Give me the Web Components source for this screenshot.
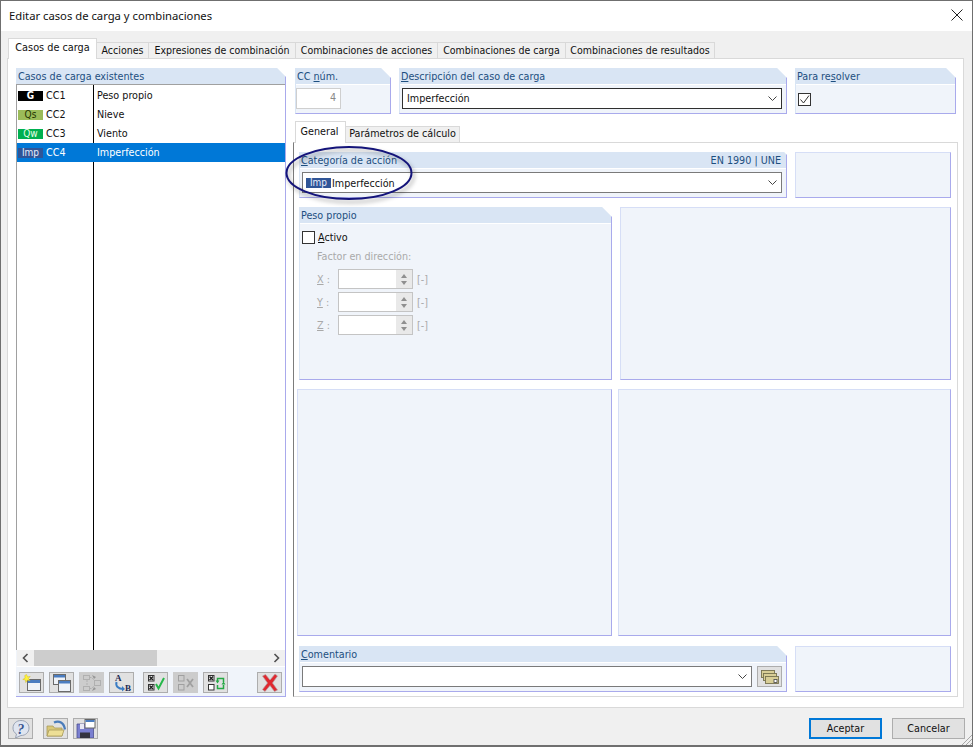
<!DOCTYPE html>
<html lang="es"><head><meta charset="utf-8"><title>Editar casos de carga y combinaciones</title>
<style>html,body{margin:0;padding:0;background:#f0f0f0;font:10.7px "DejaVu Sans Condensed","DejaVu Sans",sans-serif;color:#111}</style></head>
<body>
<x-dialog caption="Editar casos de carga y combinaciones">
  <x-tabbar slot="tabs">
    <x-tab active>Casos de carga</x-tab><x-tab w="52">Acciones</x-tab><x-tab w="147">Expresiones de combinación</x-tab><x-tab w="142">Combinaciones de acciones</x-tab><x-tab w="128">Combinaciones de carga</x-tab><x-tab w="149">Combinaciones de resultados</x-tab>
  </x-tabbar>
  <x-load-list slot="left"></x-load-list>
  <x-case-editor slot="right"></x-case-editor>
  <x-footer slot="footer"></x-footer>
</x-dialog>
<script>
function def(name,css,html,init){
  customElements.define(name,class extends HTMLElement{
    constructor(){super();const r=this.attachShadow({mode:'open'});r.innerHTML='<style>'+css+'</style>'+(typeof html==='function'?html(this):html);}
    connectedCallback(){
      if(init)init(this);
    }
  });
}
const ICON={
new:`<svg viewBox="0 0 20 18" width="20" height="18"><rect x="5.500" y="5.500" width="13" height="11" fill="#eef2f8" stroke="#6a6a6a"/><rect x="6" y="6" width="12" height="3" fill="#4a7cc0"/><path d="M4.500 .5l1.100 2.400 2.600-.5-1.700 2.100 1.500 2.200-2.600-.6L3.800 8.500l-.4-2.500-2.600-.6 2.300-1.300L2.800 1.500z" fill="#fff23a" stroke="#d0bc20" stroke-width=".5"/></svg>`,
copy:`<svg viewBox="0 0 20 18" width="20" height="18"><rect x="1.500" y=".5" width="12" height="10" fill="#eef2f8" stroke="#6a6a6a"/><rect x="2" y="1" width="11" height="2.500" fill="#4a7cc0"/><rect x="6.500" y="6.500" width="12" height="11" fill="#eef2f8" stroke="#6a6a6a"/><rect x="7" y="7" width="11" height="2.500" fill="#4a7cc0"/></svg>`,
graph:`<svg viewBox="0 0 20 18" width="20" height="18" fill="none" stroke="#b0b0b0"><rect x="1.500" y="1.500" width="6" height="4"/><rect x="1.500" y="12.500" width="6" height="4"/><rect x="12.500" y="6.500" width="6" height="5"/><path d="M7.500 3.500h2l3 3M7.500 14.500h2l3-3M5 6v6" stroke-dasharray="2 1"/><path d="M10 1l4 2-2 2zM10 17l4-2-2-2z" fill="#969696" stroke="none"/></svg>`,
ab:`<svg viewBox="0 0 20 20" width="20" height="20"><text x="3" y="8" font-family="Liberation Serif" font-weight="700" font-size="9" fill="#1c2a52">A</text><text x="13" y="18" font-family="Liberation Serif" font-weight="700" font-size="9" fill="#1c2a52">B</text><path d="M4.500 9c-1 4 1.500 7 7 7" fill="none" stroke="#3a7cc4" stroke-width="2"/><path d="M10 13l3 3-3 2.500z" fill="#3a7cc4"/></svg>`,
okcheck:`<svg viewBox="0 0 20 18" width="20" height="18"><rect x="2.500" y="1.500" width="5.500" height="5.500" fill="#fff" stroke="#333"/><path d="M3.500 2.500l3.500 3.500M7 2.500L3.500 6" stroke="#222" stroke-width="1.500"/><rect x="2.500" y="10.500" width="5.500" height="5.500" fill="#fff" stroke="#333"/><path d="M3.500 11.500l3.500 3.500M7 11.500L3.500 15" stroke="#222" stroke-width="1.500"/><path d="M10 10l2.500 4.500L18 4" fill="none" stroke="#25b84a" stroke-width="2"/></svg>`,
nocheck:`<svg viewBox="0 0 20 18" width="20" height="18" fill="none" stroke="#a0a0a0"><rect x="2.500" y="1.500" width="5.500" height="5.500"/><rect x="2.500" y="10.500" width="5.500" height="5.500"/><path d="M11 5l6 8M17 5l-6 8" stroke-width="1.800"/></svg>`,
swap:`<svg viewBox="0 0 20 18" width="20" height="18"><rect x="2.500" y="1.500" width="5.500" height="5.500" fill="#fff" stroke="#333"/><path d="M3.500 2.500l3.500 3.500M7 2.500L3.500 6" stroke="#222" stroke-width="1.500"/><rect x="2.500" y="10.500" width="5.500" height="5.500" fill="#fff" stroke="#333"/><path d="M11.500 7V4.500h6V8M17.500 11v3.500h-6V11" fill="none" stroke="#25a945" stroke-width="1.500"/><path d="M9.500 6.500h4l-2 3zM15.500 10.500h4l-2-3z" fill="#25a945"/></svg>`,
del:`<svg viewBox="0 0 20 20" width="20" height="20"><path d="M2.500 3l3-1.500 4.500 5.500 5-6 2.500 2-5 7 5 7-3 1.500-4.500-6-5 6-2.500-2 5-6.500z" fill="#e0282f" stroke="#b4a0a4" stroke-width=".7"/></svg>`,
help:`<svg viewBox="0 0 20 20" width="20" height="20"><path d="M10 1.500c4.800 0 8 3.300 8 7.500s-3.200 7.500-8 7.500l-5.500 2.500 1-4C3 13.500 2 11.500 2 9c0-4.200 3.200-7.500 8-7.500z" fill="#dfe5f0" stroke="#9aa3b4"/><text x="6.200" y="14.500" font-family="Liberation Serif" font-style="italic" font-weight="700" font-size="14" fill="#3a5590">?</text></svg>`,
open:`<svg viewBox="0 0 20 20" width="20" height="20"><path d="M1 7h6l1.500 2H16v8H1z" fill="#d9c878" stroke="#a89a5a" stroke-width=".8"/><path d="M1 17l2-6h15l-2 6z" fill="#eddf96" stroke="#a89a5a" stroke-width=".8"/><path d="M8 3.500c5-2.500 10 0 11 7" fill="none" stroke="#4a7cba" stroke-width="2.200"/></svg>`,
save:`<svg viewBox="0 0 20 20" width="20" height="20"><path d="M1 5h14l2.500 2.500V19H1z" fill="#7a7fd0" stroke="#4c4f90" stroke-width=".8"/><rect x="4" y="13.500" width="10" height="5.500" fill="#34343f"/><rect x="9" y=".5" width="10" height="8.500" fill="#fff" stroke="#666"/><rect x="9.500" y="1" width="9" height="2" fill="#4a7cc0"/><rect x="4" y="5" width="4" height="5" fill="#e8e8f4"/></svg>`,
stack:`<svg viewBox="0 0 20 18" width="20" height="18" fill="#d8ce96" stroke="#77724f" stroke-width=".9"><rect x="1.500" y="2.500" width="13" height="7"/><rect x="3.500" y="5.500" width="13" height="7"/><rect x="5.500" y="8.500" width="13" height="7"/><rect x="14" y="11.500" width="3" height="3" fill="#fff" stroke="#555"/></svg>`
};

def('x-dialog',`
:host{display:flex;flex-direction:column;box-sizing:border-box;width:973px;height:747px;border:1px solid #6f6f6f;border-bottom-width:2px;background:#f0f0f0;position:relative;overflow:hidden}
.title{height:30px;background:#fff;display:flex;align-items:center;justify-content:space-between;padding:0 9px 2px 8px;box-sizing:border-box;font:11.25px "Noto Sans",sans-serif;color:#111;flex:none}
.tabs{height:27px;padding:8px 0 0 7px;box-sizing:border-box;flex:none;position:relative;z-index:1}
.panel{margin:0 8px 0 6px;height:650px;box-sizing:border-box;border:1px solid #d9d9d9;background:#fff;padding:9px 6px 0 8px;display:flex;gap:7px;flex:none}
.foot{flex:1;min-height:0}
.grip{position:absolute;right:0;bottom:0}
`,h=>`<div class="title"><span>${h.getAttribute('caption')}</span><svg width="12" height="12" viewBox="0 0 12 12"><path d="M.5.5l11 11M11.500.5l-11 11" stroke="#222" fill="none"/></svg></div>
<div class="tabs"><slot name="tabs"></slot></div>
<div class="panel"><slot name="left"></slot><slot name="right"></slot></div>
<div class="foot"><slot name="footer"></slot></div>
<svg class="grip" width="11" height="11" viewBox="0 0 11 11" stroke="#a8a8a8"><path d="M11 1L1 11M11 5l-6 6M11 9l-2 2"/></svg>`);

def('x-tabbar',`:host{display:flex;align-items:flex-end;height:19px;font-size:10.500px}`,`<slot></slot>`);
def('x-tab',`
:host{display:block;box-sizing:border-box;height:16px;border:1px solid #d9d9d9;border-bottom:0;border-left:0;background:#f0f0f0;text-align:center;line-height:14px;white-space:nowrap;color:#111}
:host([active]){height:21px;margin-bottom:-1px;width:89px;background:#fff;border:1px solid #d9d9d9;border-bottom:0;line-height:18px;position:relative;font-size:10.800px}
`,`<slot></slot>`,h=>{const w=h.getAttribute('w');if(w)h.style.width=w+'px';});

def('x-group',`
:host{--cut:10px;display:flex;flex-direction:column;box-sizing:border-box;background:#f0f4fa;border:1px solid #d6def6;border-right-color:#a9aaec;border-bottom-color:#a9aaec;min-width:0}
:host([cut]){border-top:0;border-left-color:#d9e5f4;clip-path:polygon(0 0,calc(100% - var(--cut)) 0,100% var(--cut),100% 100%,0 100%)}
.h{display:none;justify-content:space-between;height:16px;background:#d9e5f4;color:#1d4f80;line-height:17px;padding:0 5px 0 1px;flex:none;margin-bottom:1px;box-shadow:0 1px 0 #fff;white-space:nowrap}
:host([cut]) .h{display:flex}
.b{flex:1;min-height:0;position:relative;display:flex;flex-direction:column}
`,`<div class="h"><span><slot name="h"></slot></span><span><slot name="r"></slot></span></div><div class="b"><slot></slot></div>`);

def('x-combo',`
:host{display:flex;align-items:center;box-sizing:border-box;height:21px;background:#fff;border:1px solid #7a7a7a;padding:0 4px 0 3px;color:#111}
:host([dark]){border-color:#2f2f2f}
.t{flex:1;display:flex;align-items:center;gap:1px;white-space:nowrap;padding-bottom:1px}
:host([low]) .t{padding:1px 0 0}
`,`<div class="t"><slot></slot></div><svg width="9" height="6" viewBox="0 0 9 6"><path d="M.5.500L4.500 4.500 8.500.500" fill="none" stroke="#444"/></svg>`);

def('x-badge',`:host{display:inline-block;width:25px;height:10px;line-height:9px;text-align:center;font-size:10px;background:var(--c,#000);color:var(--t,#fff);flex:none;overflow:hidden}`,`<slot></slot>`);

def('x-check',`
:host{display:flex;align-items:center;gap:3px;height:14px;white-space:nowrap}
.box{width:13px;height:13px;box-sizing:border-box;border:1px solid #333;background:#fff;display:block;flex:none}
`,h=>`<span class="box">${h.hasAttribute('checked')?'<svg width="11" height="11" viewBox="0 0 11 11" style="display:block"><path d="M1.500 5.500l3 3.500 5.500-7.500" fill="none" stroke="#333"/></svg>':''}</span><slot></slot>`);

def('x-spin',`
:host{display:flex;align-items:center;height:20px;color:#a9a9a9;margin-left:15px}
.l{width:21px}
.f{box-sizing:border-box;width:75px;height:20px;background:#fff;border:1px solid #c4c4c4;display:flex;justify-content:flex-end}
.s{width:16px;background:#e9e9e9;display:flex;flex-direction:column;align-items:center;justify-content:center;gap:3px}
.s i{width:0;height:0;border:3.500px solid transparent;border-top:0;border-bottom:4px solid #8f8f8f;display:block}
.s i+i{border-bottom:0;border-top:4px solid #8f8f8f}
.u{margin-left:4px}u{text-decoration-thickness:1px}
`,h=>`<span class="l"><u>${h.getAttribute('axis')}</u> :</span><span class="f"><span class="s"><i></i><i></i></span></span><span class="u">[-]</span>`);

def('x-btn',`
:host{display:flex;align-items:center;justify-content:center;box-sizing:border-box;width:25px;height:21px;background:#e1e1e1;border:1px solid #adadad;flex:none;overflow:hidden}
:host([off]){background:#cccccc;border-color:#cccccc}
`,h=>ICON[h.getAttribute('i')]);

def('x-row',`
:host{display:grid;grid-template-columns:76px 1fr;height:19px;line-height:20px;white-space:nowrap;color:#111}
:host([sel]){background:#0078d7;color:#fff}
.a{display:flex;align-items:center;gap:3px;padding-left:1px;--c:#000}
.d{padding-left:4px}
`,h=>`<div class="a"><slot name="b"></slot><span>${h.getAttribute('cc')}</span></div><div class="d">${h.getAttribute('d')}</div>`);

def('x-load-list',`
:host{display:flex;flex-direction:column;box-sizing:border-box;width:270px;height:629px;background:#f0f4fa;border-right:1px solid #a9aaec;border-bottom:1px solid #a9aaec;clip-path:polygon(0 0,calc(100% - 9px) 0,100% 9px,100% 100%,0 100%)}
.h{height:16px;line-height:17px;background:#d9e5f4;color:#1d4f80;padding-left:2px;flex:none}
.list{flex:none;height:566px;border:solid #a0a0a0;border-width:1px 0 0 1px;background:#fff;box-sizing:border-box;padding-top:1px;position:relative}
.list::before{content:"";position:absolute;left:76px;top:0;bottom:0;width:1px;background:#000}
x-row{position:relative}
.sb{height:16px;background:#f0f0f0;display:flex;align-items:stretch;margin-left:1px;flex:none}
.ar{width:17px;display:flex;align-items:center;justify-content:center}
.th{width:123px;background:#cdcdcd}
.sp{flex:1}
.tb{display:flex;align-items:center;padding:5px 0 0 2px;flex:none;gap:5px;border-left:1px solid #f0f4fa;background:#f0f4fa;border-top:1px solid #fff}
.g{width:0;margin-left:-1px}.g2{flex:1}
`,`<div class="h">Casos de carga existentes</div>
<div class="list">
<x-row cc="CC1" d="Peso propio"><x-badge slot="b" style="font-weight:700">G</x-badge></x-row>
<x-row cc="CC2" d="Nieve"><x-badge slot="b" style="--c:#9bbb59;--t:#1f3300">Qs</x-badge></x-row>
<x-row cc="CC3" d="Viento"><x-badge slot="b" style="--c:#00b050;--t:#e8ffe8">Qw</x-badge></x-row>
<x-row cc="CC4" d="Imperfección" sel><x-badge slot="b" style="--c:#2f5597;--t:#e8eefc">Imp</x-badge></x-row>
</div>
<div class="sb"><span class="ar"><svg width="7" height="10" viewBox="0 0 7 10"><path d="M5.500 1L1.500 5l4 4" fill="none" stroke="#505050" stroke-width="1.600"/></svg></span><span class="th"></span><span class="sp"></span><span class="ar"><svg width="7" height="10" viewBox="0 0 7 10"><path d="M1.500 1l4 4-4 4" fill="none" stroke="#505050" stroke-width="1.600"/></svg></span></div>
<div class="tb"><x-btn i="new"></x-btn><x-btn i="copy"></x-btn><x-btn i="graph" off></x-btn><x-btn i="ab"></x-btn><span class="g"></span><x-btn i="okcheck"></x-btn><x-btn i="nocheck" off></x-btn><x-btn i="swap"></x-btn><span class="g2"></span><x-btn i="del" style="margin-right:3px"></x-btn></div>`);

def('x-case-editor',`
:host{display:flex;flex-direction:column;width:664px;position:relative;color:#111}
.top{display:grid;grid-template-columns:96px 388px 161px;gap:8px;height:46px;margin-left:2px;flex:none}
.num{box-sizing:border-box;width:45px;height:21px;margin:3px 0 0 0;background:#fff;border:1px solid #cfcfcf;color:#888;text-align:right;padding-right:4px;line-height:18px}
.stabs{display:flex;align-items:flex-end;height:21px;margin:7px 0 0 2px;flex:none;position:relative;z-index:1;white-space:nowrap}
.st1{box-sizing:border-box;width:51px;height:22px;margin-bottom:-1px;background:#fff;border:1px solid #d9d9d9;border-bottom:0;text-align:center;line-height:20px;padding-right:2px}
.st2{box-sizing:border-box;width:114px;height:16px;background:#f0f0f0;border:1px solid #d9d9d9;border-left:0;border-bottom:0;text-align:center;line-height:14px}
.sub{box-sizing:border-box;height:555px;width:665px;border:1px solid #d9d9d9;border-left-color:#7c7c7c;padding:9px 5px 0 3px;display:flex;flex-direction:column;flex:none}
.r{display:grid;flex:none}
.r1{grid-template-columns:488px 156px;gap:8px;height:46px;margin-left:2px}
.r2{grid-template-columns:313px 331px;gap:8px;height:173px;margin:9px 0 0 2px}
.r3{grid-template-columns:315px 333px;gap:6px;height:247px;margin-top:9px}
.r4{grid-template-columns:488px 156px;gap:8px;height:46px;margin:10px 0 0 2px}
.c{margin:3px 4px 0 2px}
.row{display:flex;gap:5px;margin:3px 4px 0 2px}.row x-combo{flex:1}
.pp{padding:6px 0 0 2px;display:flex;flex-direction:column}
.fd{color:#a9a9a9;margin:6px 0 5px 15px;height:14px;line-height:14px}
x-spin+x-spin{margin-top:3px}
u{text-decoration-thickness:1px;text-underline-offset:1px}
.ov{position:absolute;left:-8px;top:77px;pointer-events:none;filter:drop-shadow(2px 3px 2px rgba(0,0,0,.35))}
`,`<div class="top">
<x-group cut><span slot="h">CC <u>n</u>úm.</span><div class="num">4</div></x-group>
<x-group cut><span slot="h"><u>D</u>escripción del caso de carga</span><div class="c"><x-combo dark style="padding-left:4px">Imperfección</x-combo></div></x-group>
<x-group cut><span slot="h">Para re<u>s</u>olver</span><div style="margin:7px 0 0 2px"><x-check checked></x-check></div></x-group>
</div>
<div class="stabs"><div class="st1">General</div><div class="st2">Parámetros de cálculo</div></div>
<div class="sub">
<div class="r r1"><x-group cut style="--cut:3px"><span slot="h"><u>C</u>ategoría de acción</span><span slot="r">EN 1990 | UNE</span><div class="c"><x-combo low><x-badge style="--c:#2f5597;--t:#e8eefc">Imp</x-badge>Imperfección</x-combo></div></x-group><x-group></x-group></div>
<div class="r r2"><x-group cut><span slot="h">Peso propio</span><div class="pp"><x-check><span><u>A</u>ctivo</span></x-check><div class="fd">Factor en dirección:</div><x-spin axis="X"></x-spin><x-spin axis="Y"></x-spin><x-spin axis="Z"></x-spin></div></x-group><x-group></x-group></div>
<div class="r r3"><x-group></x-group><x-group></x-group></div>
<div class="r r4"><x-group cut><span slot="h"><u>C</u>omentario</span><div class="row"><x-combo></x-combo><x-btn i="stack"></x-btn></div></x-group><x-group></x-group></div>
</div>
<svg class="ov" width="136" height="62" viewBox="0 0 136 62"><ellipse cx="64" cy="28" rx="62.500" ry="26" fill="none" stroke="#14147a" stroke-width="2"/></svg>`);

def('x-footer',`
:host{display:flex;height:100%;box-sizing:border-box;padding:10px 7px 0 7px;gap:5px;align-items:flex-start}
.sp{flex:1}.g{width:0}
.b{box-sizing:border-box;width:73px;height:21px;background:#e1e1e1;border:1px solid #adadad;text-align:center;line-height:20px;color:#111}
.p{border:2px solid #0078d7;line-height:18px}
.b+.b{margin-left:5px}
`,`<x-btn i="help"></x-btn><span class="g"></span><x-btn i="open"></x-btn><x-btn i="save"></x-btn><span class="sp"></span><div class="b p">Aceptar</div><div class="b">Cancelar</div>`);
</script>
</body></html>
